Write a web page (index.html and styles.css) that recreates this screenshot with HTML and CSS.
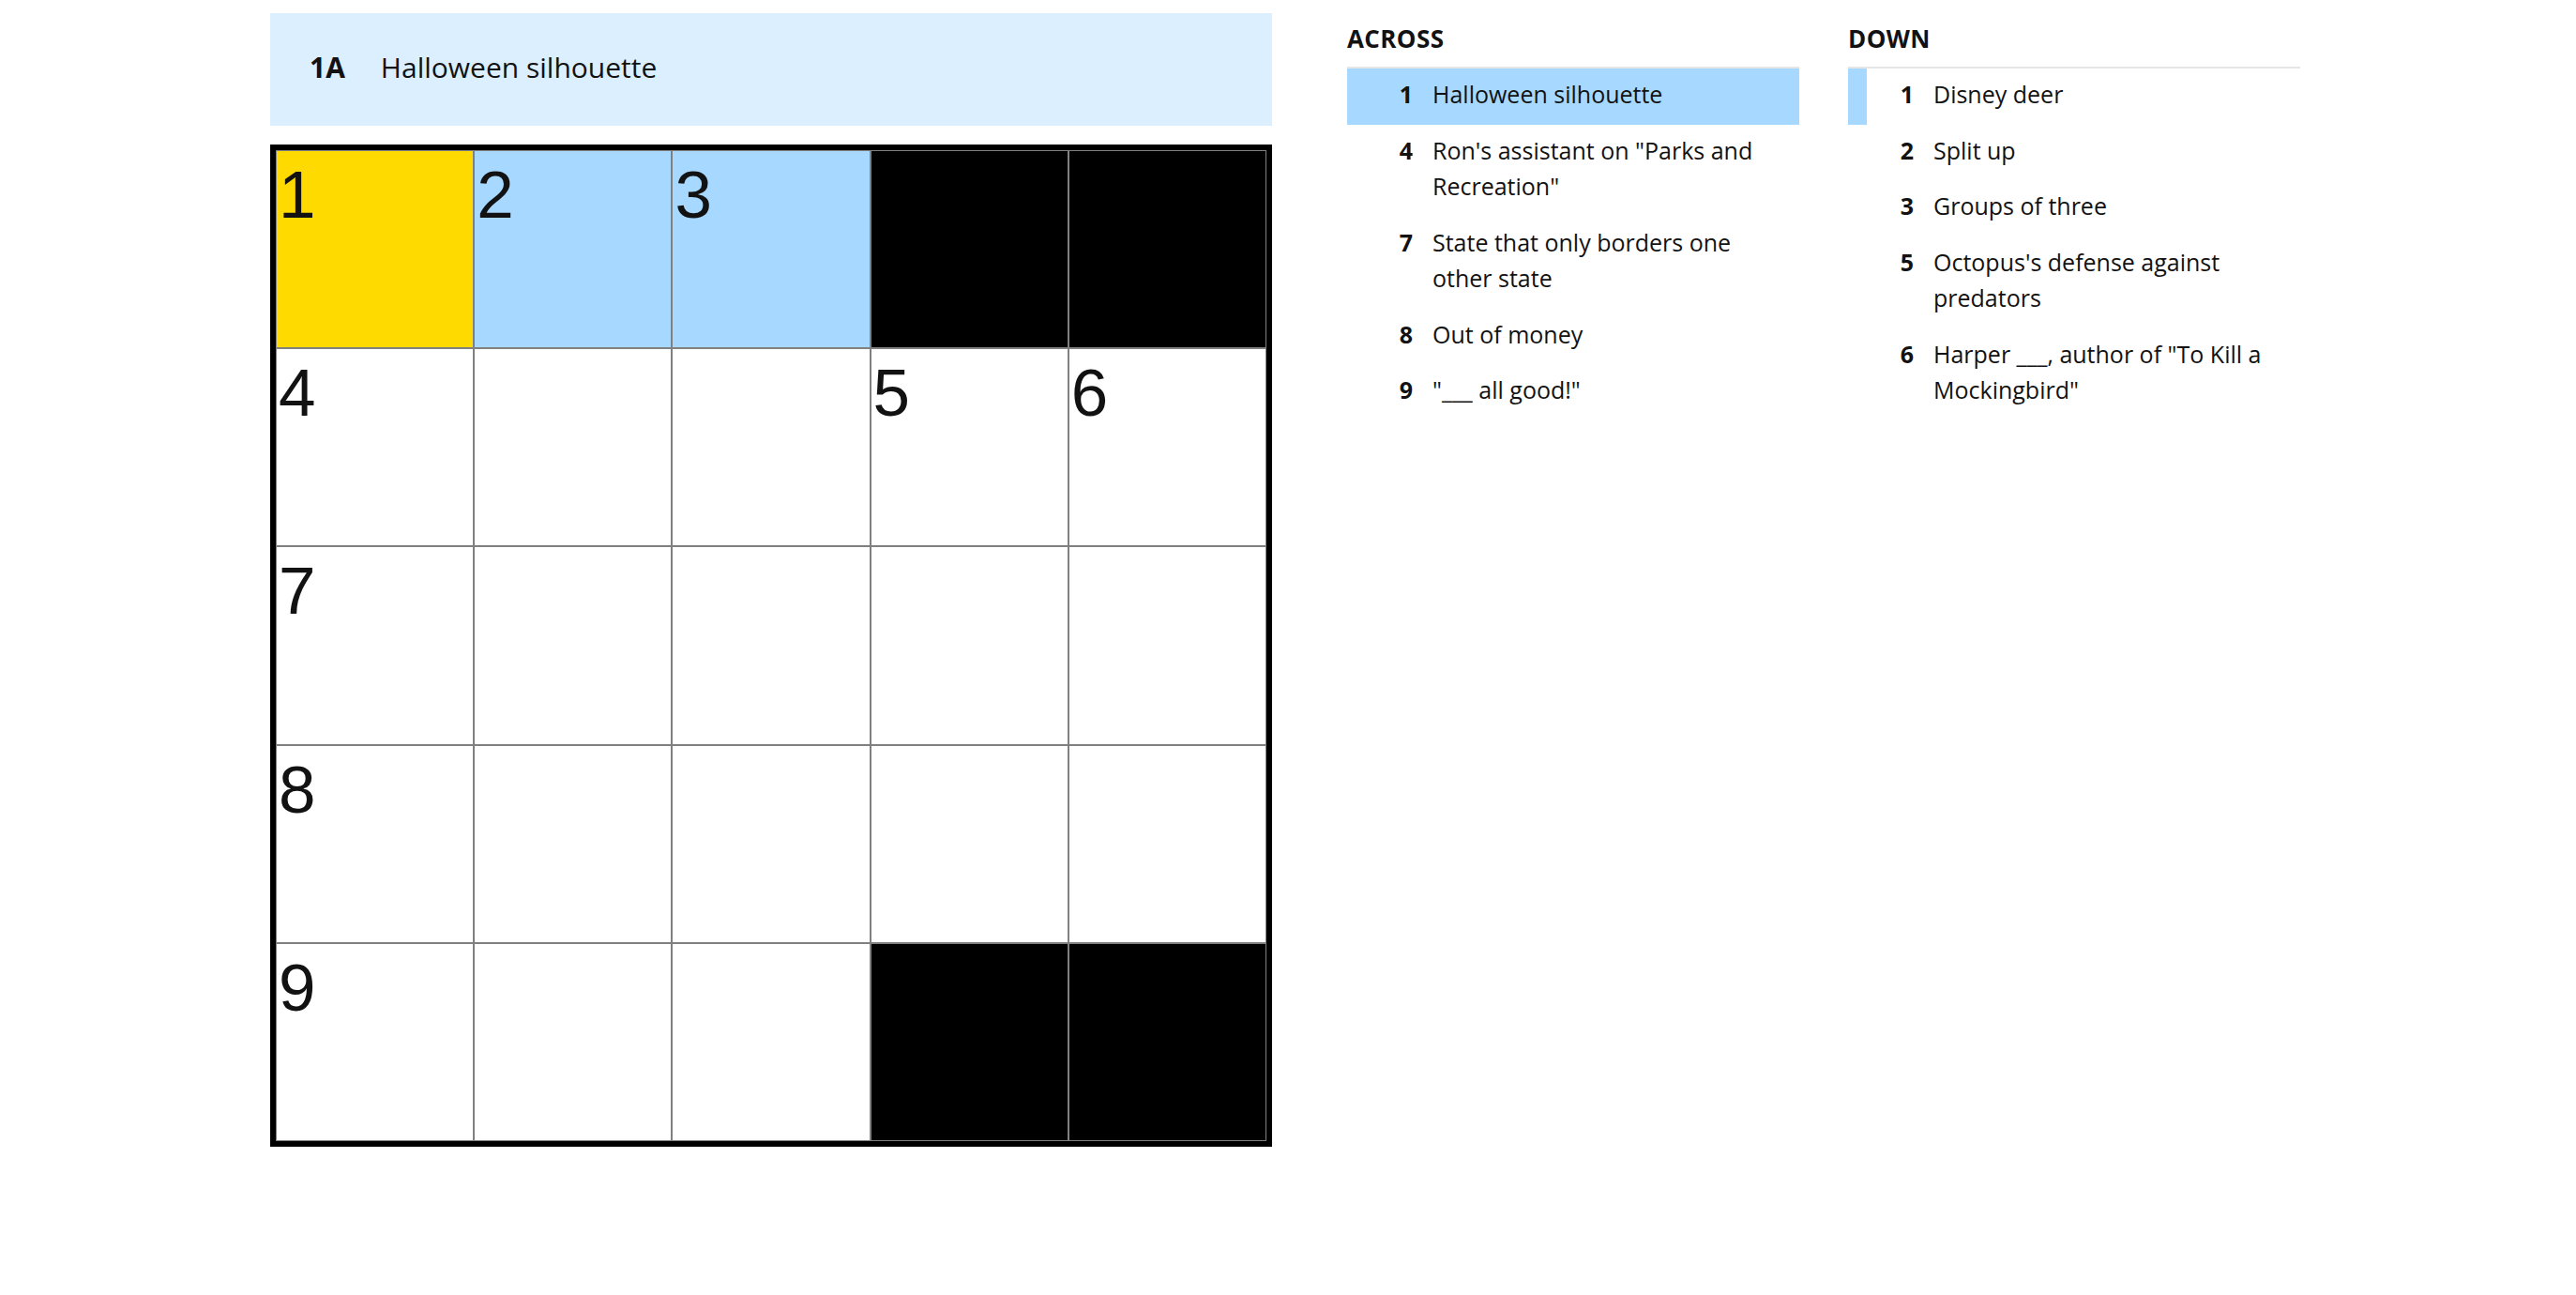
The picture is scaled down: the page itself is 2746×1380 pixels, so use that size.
FILE: index.html
```html
<!DOCTYPE html>
<html lang="en">
<head>
    <meta charset="UTF-8">
    <meta name="viewport" content="width=device-width, initial-scale=1.0">
    <title>The Mini Crossword</title>
    <link rel="stylesheet" href="styles.css">
</head>
<body>
    <div class="layout">
        <div class="puzzle">
            <div class="clue-bar">
                <span class="clue-bar-label">1A</span>
                <span class="clue-bar-text">Halloween silhouette</span>
            </div>

            <div class="board">
                <div class="cell selected"><span class="num">1</span></div>
                <div class="cell word"><span class="num">2</span></div>
                <div class="cell word"><span class="num">3</span></div>
                <div class="cell block"></div>
                <div class="cell block"></div>

                <div class="cell"><span class="num">4</span></div>
                <div class="cell"></div>
                <div class="cell"></div>
                <div class="cell"><span class="num">5</span></div>
                <div class="cell"><span class="num">6</span></div>

                <div class="cell"><span class="num">7</span></div>
                <div class="cell"></div>
                <div class="cell"></div>
                <div class="cell"></div>
                <div class="cell"></div>

                <div class="cell"><span class="num">8</span></div>
                <div class="cell"></div>
                <div class="cell"></div>
                <div class="cell"></div>
                <div class="cell"></div>

                <div class="cell"><span class="num">9</span></div>
                <div class="cell"></div>
                <div class="cell"></div>
                <div class="cell block"></div>
                <div class="cell block"></div>
            </div>
        </div>

        <div class="clue-lists">
            <section class="clue-list">
                <h3>Across</h3>
                <ol>
                    <li class="clue active"><span class="clue-num">1</span><span class="clue-text">Halloween silhouette</span></li>
                    <li class="clue"><span class="clue-num">4</span><span class="clue-text">Ron's assistant on "Parks and Recreation"</span></li>
                    <li class="clue"><span class="clue-num">7</span><span class="clue-text">State that only borders one other state</span></li>
                    <li class="clue"><span class="clue-num">8</span><span class="clue-text">Out of money</span></li>
                    <li class="clue"><span class="clue-num">9</span><span class="clue-text">"___ all good!"</span></li>
                </ol>
            </section>

            <section class="clue-list">
                <h3>Down</h3>
                <ol>
                    <li class="clue crossing"><span class="clue-num">1</span><span class="clue-text">Disney deer</span></li>
                    <li class="clue"><span class="clue-num">2</span><span class="clue-text">Split up</span></li>
                    <li class="clue"><span class="clue-num">3</span><span class="clue-text">Groups of three</span></li>
                    <li class="clue"><span class="clue-num">5</span><span class="clue-text">Octopus's defense against predators</span></li>
                    <li class="clue"><span class="clue-num">6</span><span class="clue-text">Harper ___, author of "To Kill a Mockingbird"</span></li>
                </ol>
            </section>
        </div>
    </div>
</body>
</html>
```

FILE: styles.css
```css
* {
    margin: 0;
    padding: 0;
    box-sizing: border-box;
}

body {
    background-color: #fff;
    color: #121212;
    font-family: 'Open Sans', sans-serif;
}

.layout {
    display: flex;
    align-items: flex-start;
    padding: 14px 0 0 288px;
    gap: 80px;
}

.puzzle {
    width: 1068px;
}

/* current clue banner above the grid */
.clue-bar {
    height: 120px;
    background-color: #dcefff;
    display: flex;
    align-items: center;
    padding: 0 0 6px 42px;
    font-size: 30px;
    margin-bottom: 20px;
}

.clue-bar-label {
    font-weight: 700;
    margin-right: 38px;
}

.board {
    border: 6px solid #000;
    display: grid;
    grid-template-columns: repeat(5, 1fr);
    grid-auto-rows: 211.2px;
}

.cell {
    background-color: #fff;
    box-shadow: inset 0 0 0 1px #808080;
    padding: 12px 0 0 3px;
    font-family: 'Liberation Sans', Arial, sans-serif;
    font-size: 71px;
    line-height: 1;
}

.cell.selected {
    background-color: #ffda00;
}

.cell.word {
    background-color: #a7d8ff;
}

.cell.block {
    background-color: #000;
}

.clue-lists {
    display: flex;
    gap: 52px;
    padding-top: 10px;
}

.clue-list {
    width: 482px;
}

.clue-list h3 {
    font-size: 26px;
    font-weight: 700;
    letter-spacing: 0.4px;
    line-height: 34px;
    text-transform: uppercase;
    margin-bottom: 13px;
}

.clue-list ol {
    list-style: none;
    border-top: 2px solid #e6e6e6;
}

.clue {
    display: flex;
    font-size: 25px;
    line-height: 38.5px;
    padding: 8px 20px 13px 0;
}

.clue-num {
    flex: none;
    width: 70px;
    text-align: right;
    font-weight: 700;
    margin-right: 21px;
}

.clue.active {
    background-color: #a7d8ff;
}

.clue.crossing {
    box-shadow: inset 20px 0 0 #a7d8ff;
}
```
